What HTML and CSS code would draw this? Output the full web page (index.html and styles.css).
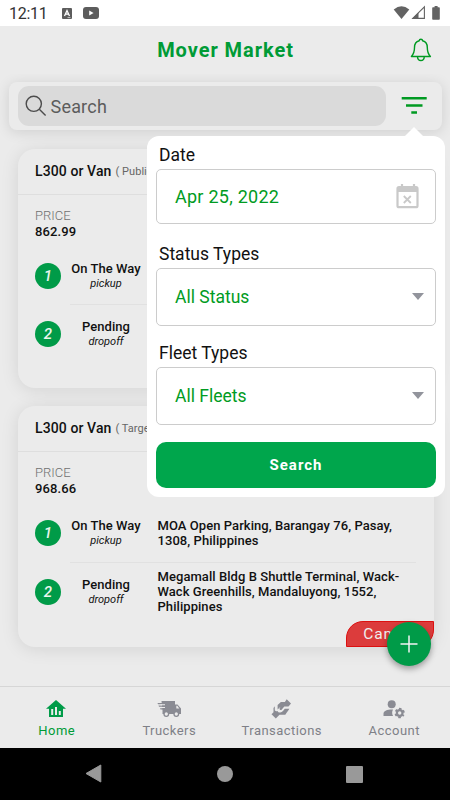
FILE: index.html
```html
<!DOCTYPE html>
<html lang="en">
<head>
<meta charset="utf-8">
<title>Mover Market</title>
<link rel="stylesheet" href="styles.css">
</head>
<body>
<div class="phone">
  <div class="status-bar">
    <span class="clock">12:11</span>
    <svg class="status-app" width="10" height="11" viewBox="0 0 10 11"><rect width="10" height="11" rx="1" fill="#5c5c5c"/><path d="M2.500 8 5 2.500 7.500 8M3.500 6.200h3" fill="none" stroke="#fff" stroke-width="1.300"/><path d="M5.500 9.600h3" stroke="#ddd" stroke-width=".8"/></svg>
    <svg class="status-video" width="16" height="12" viewBox="0 0 16 12"><rect width="16" height="12" rx="3" fill="#5c5c5c"/><path d="M6.200 3.500v5L10.600 6z" fill="#fff"/></svg>
    <svg class="status-icons" width="50" height="16" viewBox="0 0 50 16"><path d="M.7 4.500Q8.500-1.800 16.300 4.500L8.500 14z" fill="#636363"/><path d="M19.800 13.400 31.400 1.800v11.600z" fill="none" stroke="#636363" stroke-width="1.100"/><path d="M19 13.800 25.500 7.300v6.500z" fill="#636363"/><path d="M41.600 1h3v1.200h1.400q.8 0 .8.800v11q0 .8-.8.800h-6q-.8 0-.8-.8V3q0-.8.8-.8h1.600z" fill="#636363"/></svg>
  </div>

  <header class="header">
    <h1>Mover Market</h1>
    <svg class="bell" width="22" height="24" viewBox="0 0 22 24" fill="none" stroke="#009a22" stroke-width="1.400" stroke-linejoin="round"><path d="M9.200 2.800Q9.300 1.200 10.900 1.200T12.600 2.800C16 3.700 17.300 6.100 17.300 9.500c0 4.500.7 6.500 3.100 9H1.400c2.400-2.500 3.100-4.500 3.100-9 0-3.400 1.300-5.800 4.700-6.700zM7.500 18.700c.2 5 6.600 5 6.800 0"/></svg>
  </header>

  <main class="content">
    <div class="search-panel">
      <div class="search-box">
        <svg width="22" height="22" viewBox="0 0 22 22" fill="none" stroke="#4c4c4c" stroke-width="1.400"><circle cx="8.800" cy="8.800" r="7.600"/><path d="m14.300 14.300 6.300 6.200"/></svg>
        <span>Search</span>
      </div>
      <svg class="filter" width="26" height="18" viewBox="0 0 26 18" fill="#009a22"><path d="M.7 0h25v2.500h-25zM5 7.200h16.500v2.500H5zM10.300 14.300H16v2.500h-5.700z"/></svg>
    </div>

    <article class="card card-first">
      <div class="card-head"><strong>L300 or Van</strong><span>( Public )</span></div>
      <div class="price"><span>PRICE</span><strong>862.99</strong></div>
      <div class="stop stop-one">
        <b class="number">1</b>
        <div class="state"><strong>On The Way</strong><em>pickup</em></div>
        <p class="address"></p>
      </div>
      <div class="stop stop-two">
        <b class="number">2</b>
        <div class="state"><strong>Pending</strong><em>dropoff</em></div>
        <p class="address"></p>
      </div>
    </article>

    <article class="card card-second">
      <div class="card-head"><strong>L300 or Van</strong><span>( Target )</span></div>
      <div class="price"><span>PRICE</span><strong>968.66</strong></div>
      <div class="stop stop-one">
        <b class="number">1</b>
        <div class="state"><strong>On The Way</strong><em>pickup</em></div>
        <p class="address">MOA Open Parking, Barangay 76, Pasay,<br>1308, Philippines</p>
      </div>
      <div class="stop stop-two">
        <b class="number">2</b>
        <div class="state"><strong>Pending</strong><em>dropoff</em></div>
        <p class="address">Megamall Bldg B Shuttle Terminal, Wack-<br>Wack Greenhills, Mandaluyong, 1552,<br>Philippines</p>
      </div>
      <div class="cancel">Cancel</div>
    </article>
  </main>

  <nav class="tabs">
    <div class="tab active">
      <svg width="20" height="18" viewBox="0 0 20 18"><path d="M10 0 20 8.800h-3V17H3V8.800H0z" fill="#009b48"/><path d="M5.200 9h2v6h-2zM9 7h2v8H9zM12.800 11h2v4h-2z" fill="#ebebeb"/></svg>
      <span>Home</span>
    </div>
    <div class="tab">
      <svg width="26" height="18" viewBox="0 0 26 18" fill="#8a8b93"><path d="M5.500 1H19v3.500h2.500l3.500 4V14H6.500v-3.500z"/><path d="M1.500 3H9v1.200H2zM2.500 5.600H9v1.200H3zM4 8.300h5v1.200H4.500z"/><path d="M4.500 4.200H9v1H4.500zM4.500 6.900H9v1H4.500z" fill="#ebebeb"/><path d="M20.300 5.800h1l2 2.600h-3z" fill="#ebebeb"/><circle cx="10.300" cy="14" r="2.300" fill="#ebebeb" stroke="#8a8b93" stroke-width="1.300"/><circle cx="20.300" cy="14" r="2.300" fill="#ebebeb" stroke="#8a8b93" stroke-width="1.300"/></svg>
      <span>Truckers</span>
    </div>
    <div class="tab">
      <svg width="20" height="20" viewBox="0 0 20 20" fill="#8a8b93"><path d="M15.700.3 20 4.600l-2.500 2.800h-4.200l-2.500 3.200q-1 1-2 0-.7-.8 0-1.700l.7-1.200-2.900 2.800V6.100l3.300-3h4z"/><path d="M3.800 7.200v4.100q1.200 1.400 2.700.6.600 1.800 2.700 1.600 1.600-.2 3-1.800l1.600-2h4.600l-1.300 2-1.300 1.800-1.500 2.200H8.500L4.800 19.500.5 15.200l2-2V9z"/></svg>
      <span>Transactions</span>
    </div>
    <div class="tab">
      <svg width="24" height="20" viewBox="0 0 24 20"><g fill="#8a8b93"><circle cx="9.700" cy="5.300" r="4"/><path d="M1.500 17v-2.300c0-3 4.300-4.400 9.500-4.200-1.200 2.200-1.100 4.400.1 6.500z"/></g><circle cx="17.700" cy="14" r="2.800" fill="none" stroke="#8a8b93" stroke-width="2.200"/><circle cx="17.700" cy="14" r="4.300" fill="none" stroke="#8a8b93" stroke-width="1.700" stroke-dasharray="2.400 2.103" stroke-dashoffset="1.200" transform="rotate(30 17.700 14)"/></svg>
      <span>Account</span>
    </div>
  </nav>

  <div class="system-nav">
    <svg width="17" height="20" viewBox="0 0 17 20"><path d="M15.800 1v17L1 9.500z" fill="#999" stroke="#999" stroke-linejoin="round"/></svg>
    <i class="home-dot"></i>
    <i class="recent"></i>
  </div>

  <button class="fab" aria-label="Add"><svg width="18" height="18" viewBox="0 0 18 18"><path d="M9 .5v17M.5 9h17" stroke="#f3f3f3" stroke-width="1.500"/></svg></button>

  <section class="popover">
    <label>Date</label>
    <div class="field date">
      <span>Apr 25, 2022</span>
      <svg width="23" height="25" viewBox="0 0 23 25" fill="none" stroke="#c9c9c9"><path d="M6 0v4M18 0v4" stroke-width="2.200"/><rect x="1.500" y="3.200" width="20" height="20" rx="1.500" stroke-width="2.200"/><path d="M1.500 5.500h20" stroke-width="5"/><path d="m7.800 12 7 7m0-7-7 7" stroke-width="1.800"/></svg>
    </div>
    <label>Status Types</label>
    <div class="field select"><span>All Status</span><i class="caret"></i></div>
    <label>Fleet Types</label>
    <div class="field select"><span>All Fleets</span><i class="caret"></i></div>
    <button class="submit">Search</button>
  </section>
</div>
</body>
</html>
```
FILE: styles.css
```css
* { box-sizing: border-box; }
body { margin: 0; font-family: Roboto, "Liberation Sans", sans-serif; }
h1, p { margin: 0; }
button { border: 0; padding: 0; font-family: inherit; }
svg { flex: none; display: block; }
.phone { position: relative; display: flex; flex-direction: column; width: 450px; height: 800px; overflow: hidden; background: #ebebeb; }

.status-bar { display: flex; align-items: center; height: 26px; flex: none; background: #fff; padding-left: 9px; color: #333; }
.clock { width: 53px; font-size: 16px; letter-spacing: -.3px; line-height: 26px; padding-top: 2px; }
.status-video { margin-left: 11px; }
.status-icons { margin-left: auto; margin-right: 7px; }

.header { display: flex; align-items: center; justify-content: center; position: relative; height: 48px; flex: none; }
.header h1 { font-size: 20px; line-height: 24px; font-weight: 700; letter-spacing: .95px; color: #009b36; padding-left: 1px; }
.bell { position: absolute; right: 18px; top: 12px; }

.content { flex: 1; overflow: hidden; padding: 8px 8px 0 9px; }
.search-panel { display: flex; align-items: center; height: 48px; border-radius: 8px; padding: 0 15px 0 8.500px; background: #ebebeb; box-shadow: 0 2px 14px rgba(0,0,0,.12); }
.search-box { display: flex; align-items: center; gap: 4px; width: 368px; height: 40px; padding-left: 7px; border-radius: 11px; background: #dadada; color: #5c5c5c; font-size: 18px; letter-spacing: .2px; }
.filter { margin-left: auto; }

.card { position: relative; width: 416px; margin-left: 8.500px; border-radius: 17px; background: #ebebeb; box-shadow: 0 2px 18px rgba(0,0,0,.1); color: #111; }
.card-first { height: 239px; margin-top: 19px; }
.card-second { height: 241px; margin-top: 18px; }
.card-head { display: flex; align-items: center; gap: 4px; height: 46px; padding: 0 0 1px 17.500px; border-bottom: 1px solid #dedede; }
.card-head strong { font-size: 14px; font-weight: 500; letter-spacing: .1px; }
.card-head span { font-size: 11px; color: #666; letter-spacing: .05px; }
.price { display: flex; flex-direction: column; padding: 13px 0 0 17.500px; height: 57px; }
.price span { font-size: 13px; line-height: 16px; color: #707070; font-weight: 300; }
.price strong { font-size: 13px; line-height: 15px; font-weight: 500; letter-spacing: .1px; }
.stop { display: flex; align-items: center; margin: 0 17.500px; }
.stop-one { height: 48px; }
.stop-two { height: 68px; position: relative; }
.stop-two::before { content: ""; position: absolute; left: 35px; right: 0; top: 4px; height: 1px; background: #e1e1e1; }
.card-second .stop-two { height: 69px; }
.card-second .stop-two::before { top: 5px; }
.number { display: flex; align-items: center; justify-content: center; width: 26px; height: 26px; flex: none; border-radius: 50%; background: #009b48; color: #e9f5ee; font-size: 15px; font-style: italic; font-weight: 500; }
.state { display: flex; flex-direction: column; align-items: center; width: 90px; flex: none; }
.state strong { font-size: 13px; line-height: 15px; font-weight: 500; letter-spacing: .03px; }
.state em { font-size: 11px; line-height: 15px; }
.address { margin-left: 6.500px; font-size: 13px; line-height: 15px; font-weight: 500; letter-spacing: .06px; white-space: nowrap; }
.cancel { position: absolute; right: 0; bottom: 0; width: 88px; height: 26px; border: 1px solid #dc1010; border-radius: 17px 0 17px 0; background: #dc3c3c; color: #eee; text-align: center; font-size: 15.500px; line-height: 24px; letter-spacing: .9px; }

.tabs { display: flex; flex: none; height: 62px; border-top: 1px solid #d6d6d6; background: #ebebeb; color: #7e8087; }
.tab { display: flex; flex-direction: column; align-items: center; flex: 1; padding-top: 12px; font-size: 13px; letter-spacing: .45px; }
.tab svg { height: 20px; }
.tab span { line-height: 16px; margin: 4px 0 0 1px; }
.tab.active { color: #009b36; }
.system-nav { display: flex; align-items: center; justify-content: space-between; flex: none; height: 52px; padding: 0 87px 0 85px; background: #000; }
.home-dot { width: 16px; height: 16px; margin-left: 1px; border-radius: 50%; background: #999; }
.recent { width: 17px; height: 17px; border-radius: 1px; background: #999; }

.fab { position: absolute; left: 387px; top: 622px; display: flex; align-items: center; justify-content: center; width: 44px; height: 44px; border-radius: 50%; background: #009b48; box-shadow: 0 3px 6px rgba(0,0,0,.35); }

.popover { position: absolute; left: 147px; top: 136px; width: 298px; height: 361px; padding: 9px 9px 0; border-radius: 12px; background: #fff; display: flex; flex-direction: column; }
.popover::before { content: ""; position: absolute; left: 257px; top: -9px; border: 10px solid transparent; border-top: 0; border-bottom: 10px solid #fff; }
.popover label { font-size: 17.500px; line-height: 21px; padding-left: 3px; color: #111; letter-spacing: 0; margin-bottom: 3px; }
.field { display: flex; align-items: center; justify-content: space-between; height: 55px; flex: none; padding: 0 16px 0 18px; border: 1px solid #ccc; border-radius: 5px; color: #009b22; font-size: 18px; letter-spacing: .25px; }
.field + label { margin-top: 20px; }
.field.select { height: 58px; padding: 0 11px 1px 18px; font-size: 17.500px; letter-spacing: 0; }
.field.select + label { margin-top: 17px; }
.caret { border: 6px solid transparent; border-top: 7px solid #92949c; border-bottom: 0; }
.submit { height: 46px; margin-top: 17px; flex: none; border-radius: 10px; background: #00a64c; color: #fff; font-weight: 700; font-size: 15px; letter-spacing: 1px; }
```
